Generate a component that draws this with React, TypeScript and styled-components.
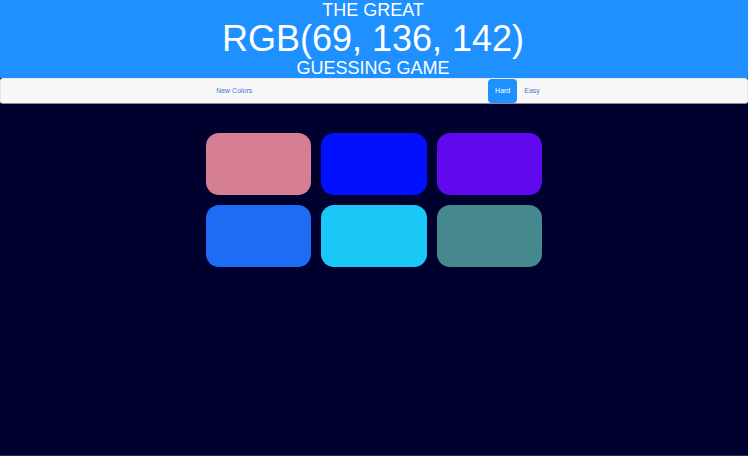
import React, { useState } from "react";
import styled, { createGlobalStyle } from "styled-components";

const GlobalStyle = createGlobalStyle`
  *, *::before, *::after { box-sizing: border-box; }
  body {
    margin: 0;
    background: #00002e;
    font-family: "Liberation Sans", Arial, sans-serif;
  }
`;

const Page = styled.div`
  min-height: 100vh;
  border-bottom: 1px solid #26266e;
`;

const Header = styled.header`
  background: #1e90ff;
  color: #fff;
  text-align: center;
`;

const Title = styled.h1`
  display: flex;
  flex-direction: column;
  margin: 0;
  padding-right: 2px;
  font-size: 18px;
  font-weight: 400;
  line-height: 20px;
  text-transform: uppercase;
`;

const Line = styled.span``;

const Target = styled.span`
  font-size: 36px;
  line-height: 38px;
`;

const Bar = styled.nav`
  background: #f8f8f8;
  border: 1px solid #e7e7e7;
  border-bottom-color: #8c8c98;
  border-radius: 3px;
`;

const BarContent = styled.div`
  display: flex;
  justify-content: space-between;
  width: calc(45% + 10px);
  margin: 0 auto;
  padding-left: 8px;
`;

const Modes = styled.div`
  display: flex;
`;

const BarButton = styled.button<{ $active?: boolean }>`
  border: 0;
  border-radius: 4px;
  padding: 0 7px;
  font-family: inherit;
  font-size: 7px;
  line-height: 24px;
  cursor: pointer;
  color: ${(p) => (p.$active ? "#fff" : "#3c7ccc")};
  background: ${(p) => (p.$active ? "#1e90ff" : "transparent")};
`;

const Grid = styled.main`
  display: grid;
  grid-template-columns: repeat(3, 1fr);
  gap: 10px;
  width: 45%;
  margin: 0 auto;
  padding-top: 29px;
`;

const Swatch = styled.button<{ $color: string }>`
  height: 62px;
  padding: 0;
  border: 0;
  border-radius: 13px;
  background: ${(p) => p.$color};
  cursor: pointer;
`;

const colors = ["#d67f94", "#0010ff", "#6008ee", "#1e6cf4", "#1ac8f8", "#45888e"];

export default function App() {
  const [mode, setMode] = useState("Hard");
  return (
    <Page>
      <GlobalStyle />
      <Header>
        <Title>
          <Line>The Great</Line>
          <Target>RGB(69, 136, 142)</Target>
          <Line>Guessing Game</Line>
        </Title>
      </Header>
      <Bar>
        <BarContent>
          <BarButton type="button">New Colors</BarButton>
          <Modes>
            {["Hard", "Easy"].map((name) => (
              <BarButton
                key={name}
                type="button"
                $active={mode === name}
                aria-pressed={mode === name}
                onClick={() => setMode(name)}
              >
                {name}
              </BarButton>
            ))}
          </Modes>
        </BarContent>
      </Bar>
      <Grid>
        {(mode === "Hard" ? colors : colors.slice(0, 3)).map((color) => (
          <Swatch key={color} type="button" $color={color} aria-label={color} />
        ))}
      </Grid>
    </Page>
  );
}
